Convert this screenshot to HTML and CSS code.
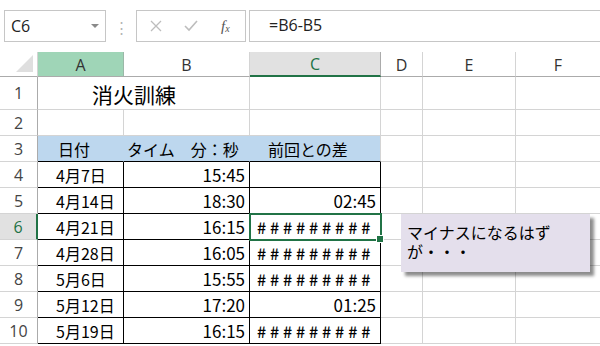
FILE: index.html
```html
<!DOCTYPE html>
<html lang="ja">
<head>
  <meta charset="UTF-8">
  <title>消火訓練</title>
  <link rel="stylesheet" href="styles.css">
</head>
<body>
<div class="excel">
  <div class="formula-bar">
    <div class="name-box">
      <span class="ref">C6</span>
      <span class="caret"></span>
    </div>
    <div class="grip">⋮</div>
    <div class="fx-box">
      <svg class="icon" width="12" height="12" viewBox="0 0 12 12"><path d="M1 1 L11 11 M11 1 L1 11" stroke="#bdbdbd" stroke-width="1.3" fill="none"/></svg>
      <svg class="icon" width="14" height="12" viewBox="0 0 14 12"><path d="M1 6 L5 10 L13 1" stroke="#bdbdbd" stroke-width="1.6" fill="none"/></svg>
      <span class="fx">f<sub>x</sub></span>
    </div>
    <div class="formula">=B6-B5</div>
  </div>

  <div class="sheet">
    <div class="corner"><span></span></div>
    <div class="col-head active-a">A</div>
    <div class="col-head">B</div>
    <div class="col-head selected">C</div>
    <div class="col-head">D</div>
    <div class="col-head">E</div>
    <div class="col-head last">F</div>

    <div class="row-head">1</div>
    <div class="cell title span2">消火訓練</div>
    <div class="cell"></div><div class="cell"></div><div class="cell"></div><div class="cell last"></div>

    <div class="row-head">2</div>
    <div class="cell"></div><div class="cell"></div><div class="cell"></div><div class="cell"></div><div class="cell"></div><div class="cell last"></div>

    <div class="row-head">3</div>
    <div class="cell head-fill dark-b first">日付</div>
    <div class="cell head-fill dark-b second">タイム　分：秒</div>
    <div class="cell head-fill dark-b third">前回との差</div>
    <div class="cell"></div><div class="cell"></div><div class="cell last"></div>

    <div class="row-head">4</div>
    <div class="cell box date">4月7日</div>
    <div class="cell box num">15:45</div>
    <div class="cell box num"></div>
    <div class="cell"></div><div class="cell"></div><div class="cell last"></div>

    <div class="row-head">5</div>
    <div class="cell box date">4月14日</div>
    <div class="cell box num">18:30</div>
    <div class="cell box num">02:45</div>
    <div class="cell"></div><div class="cell"></div><div class="cell last"></div>

    <div class="row-head current">6</div>
    <div class="cell box date">4月21日</div>
    <div class="cell box num">16:15</div>
    <div class="cell box hash active">#########</div>
    <div class="cell"></div><div class="cell"></div><div class="cell last"></div>

    <div class="row-head">7</div>
    <div class="cell box date">4月28日</div>
    <div class="cell box num">16:05</div>
    <div class="cell box hash">#########</div>
    <div class="cell"></div><div class="cell"></div><div class="cell last"></div>

    <div class="row-head">8</div>
    <div class="cell box date">5月6日</div>
    <div class="cell box num">15:55</div>
    <div class="cell box hash">#########</div>
    <div class="cell"></div><div class="cell"></div><div class="cell last"></div>

    <div class="row-head">9</div>
    <div class="cell box date">5月12日</div>
    <div class="cell box num">17:20</div>
    <div class="cell box num">01:25</div>
    <div class="cell"></div><div class="cell"></div><div class="cell last"></div>

    <div class="row-head">10</div>
    <div class="cell box date">5月19日</div>
    <div class="cell box num">16:15</div>
    <div class="cell box hash">#########</div>
    <div class="cell"></div><div class="cell"></div><div class="cell last"></div>

    <div class="comment">
      <div class="line">マイナスになるはず</div>
      <div class="line">が・・・</div>
    </div>
  </div>
</div>
</body>
</html>
```

FILE: styles.css
```css
* {
    box-sizing: border-box;
}

html, body {
    width: 100%;
    height: 100%;
    margin: 0;
    padding: 0;
    background: #ffffff;
}

.excel {
    font-family: "Noto Sans CJK JP", "Noto Sans", sans-serif;
    color: #000;
    overflow: hidden;
    width: 600px;
    height: 346px;
}

/* formula bar */
.formula-bar {
    display: flex;
    align-items: center;
    height: 52px;
    padding-left: 4px;
}

.formula-bar .name-box {
    display: flex;
    align-items: center;
    justify-content: space-between;
    width: 102px;
    height: 32px;
    border: 1px solid #c6c6c6;
    padding: 0 6px 0 6px;
    font-family: "Open Sans", "Noto Sans", sans-serif;
    font-size: 16px;
    color: #222;
}

.formula-bar .caret {
    width: 0;
    height: 0;
    border-left: 4px solid transparent;
    border-right: 4px solid transparent;
    border-top: 4px solid #8a8a8a;
}

.formula-bar .grip {
    width: 30px;
    text-align: center;
    color: #b5b5b5;
    font-size: 15px;
}

.formula-bar .fx-box {
    display: flex;
    align-items: center;
    width: 110px;
    height: 32px;
    border: 1px solid #c6c6c6;
    padding: 0 0 0 13px;
    gap: 22px;
}

.formula-bar .fx {
    font-family: "Liberation Serif", serif;
    font-style: italic;
    font-size: 15px;
    color: #555;
    margin-left: 1px;
}

.formula-bar .fx sub {
    font-size: 10px;
    vertical-align: -1px;
}

.formula-bar .formula {
    flex: 1 1 0;
    height: 32px;
    margin-left: 3px;
    border: 1px solid #c6c6c6;
    border-right: none;
    padding: 3px 0 0 19px;
    font-family: "Open Sans", "Noto Sans", sans-serif;
    font-size: 16px;
    color: #222;
}

/* sheet grid */
.sheet {
    position: relative;
    display: grid;
    grid-template-columns: 38px 86px 126px 131px 42px 93px 84px;
    grid-template-rows: 25px 33px repeat(9, 26px);
}

.corner {
    position: relative;
    border-right: 1px solid #d4d4d4;
    border-bottom: 1px solid #ababab;
}

.corner span {
    position: absolute;
    right: 4px;
    bottom: 4px;
    width: 0;
    height: 0;
    border-left: 17px solid transparent;
    border-bottom: 17px solid #dfdfdf;
}

.col-head {
    display: flex;
    align-items: center;
    justify-content: center;
    border-right: 1px solid #d4d4d4;
    border-bottom: 1px solid #ababab;
    font-family: "Open Sans", "Noto Sans", sans-serif;
    font-size: 16px;
    color: #333;
    padding-top: 1px;
}

.col-head.active-a {
    background: #9fd5b7;
    border-right-color: #9bb8a8;
}

.col-head.selected {
    background: #e1e1e1;
    border-bottom: 2px solid #217346;
    border-right-color: #ababab;
    color: #217346;
}

.col-head.last,
.cell.last {
    border-right: none;
}

.row-head {
    display: flex;
    align-items: center;
    justify-content: center;
    border-right: 1px solid #ababab;
    border-bottom: 1px solid #d4d4d4;
    font-family: "Open Sans", "Noto Sans", sans-serif;
    font-size: 16px;
    color: #444;
}

.row-head.current {
    background: #e1e1e1;
    border-right: 2px solid #217346;
    color: #217346;
}

.cell {
    display: flex;
    align-items: center;
    border-right: 1px solid #d4d4d4;
    border-bottom: 1px solid #d4d4d4;
    font-size: 16px;
    white-space: nowrap;
    line-height: 1;
}

.cell.span2 {
    grid-column: span 2;
}

.cell.title {
    font-size: 21px;
    padding-left: 54px;
    padding-top: 3px;
}

.cell.head-fill {
    background: #bdd7ee;
    border-right-color: #bdd7ee;
}

.cell.head-fill.first {
    padding-left: 20px;
}

.cell.head-fill.second {
    padding-left: 3px;
}

.cell.head-fill.third {
    padding-left: 18px;
    border-right-color: #d4d4d4;
}

.cell.dark-b {
    border-bottom: 1px solid #000;
}

.cell.box {
    border-right: 1px solid #000;
    border-bottom: 1px solid #000;
}

.cell.date {
    padding-left: 18px;
}

.cell.num {
    justify-content: flex-end;
    padding-right: 4px;
    font-size: 17px;
}

.cell.hash {
    padding-left: 7px;
    letter-spacing: 3.9px;
    font-size: 16px;
    font-weight: 500;
}

.cell.active {
    position: relative;
    outline: 2px solid #217346;
    outline-offset: -1px;
}

.cell.active::after {
    content: "";
    position: absolute;
    right: -4px;
    bottom: -4px;
    width: 6px;
    height: 6px;
    background: #217346;
    border: 1px solid #fff;
}

/* comment callout */
.comment {
    position: absolute;
    left: 401px;
    top: 162px;
    width: 189px;
    height: 58px;
    display: flex;
    flex-direction: column;
    gap: 1px;
    background: #e4dfec;
    box-shadow: 4px 4px 3px rgba(0, 0, 0, 0.45);
    padding: 9px 6px 0;
    font-size: 16px;
}

.comment .line {
    line-height: 18px;
}
```
